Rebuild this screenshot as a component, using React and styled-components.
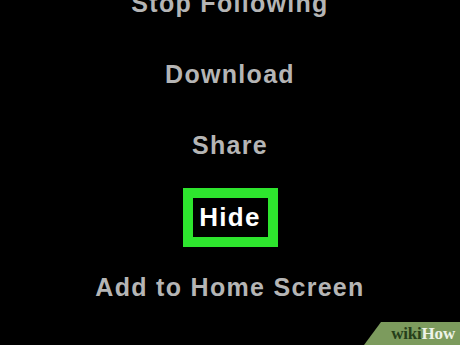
import React from 'react';
import styled, { createGlobalStyle } from 'styled-components';

const GlobalStyle = createGlobalStyle`
  html, body {
    margin: 0;
    padding: 0;
    background: #000;
  }
  body {
    width: 460px;
    height: 345px;
    overflow: hidden;
  }
`;

const Screen = styled.div`
  position: relative;
  width: 460px;
  height: 345px;
  background: #000;
  overflow: hidden;
`;

const Menu = styled.ul`
  list-style: none;
  margin: -32px 0 0;
  padding: 0;
  display: flex;
  flex-direction: column;
  align-items: center;
`;

const Item = styled.li`
  height: 71px;
  display: flex;
  align-items: center;
  justify-content: center;
  font-family: 'Liberation Sans', Arial, sans-serif;
  font-weight: bold;
  font-size: 25px;
  letter-spacing: 1.3px;
  color: ${(p) => (p.active ? '#fff' : '#b5b5b5')};
`;

const Highlight = styled.span`
  display: inline-flex;
  align-items: center;
  justify-content: center;
  width: 75px;
  height: 39px;
  margin-top: 2px;
  border: 10px solid #2ee52e;
  font-size: 26px;
`;

const Badge = styled.div`
  position: absolute;
  right: 0;
  bottom: 0;
  width: 96px;
  height: 23px;
  background: #7c9b5d;
  clip-path: polygon(17px 0, 100% 0, 100% 100%, 0 100%);
  display: flex;
  align-items: center;
  justify-content: flex-end;
  padding-right: 5px;
  box-sizing: border-box;
  font-family: 'Liberation Serif', 'Times New Roman', serif;
  font-weight: bold;
  font-size: 17px;
  letter-spacing: -0.2px;

  .wiki {
    color: #263f1a;
  }
  .how {
    color: #eef3e8;
  }
`;

const items = ['Stop Following', 'Download', 'Share', 'Hide', 'Add to Home Screen'];

const App = () => (
  <>
    <GlobalStyle />
    <Screen>
      <Menu>
        {items.map((label) =>
          label === 'Hide' ? (
            <Item key={label} active>
              <Highlight>{label}</Highlight>
            </Item>
          ) : (
            <Item key={label}>{label}</Item>
          )
        )}
      </Menu>
      <Badge>
        <span className="wiki">wiki</span>
        <span className="how">How</span>
      </Badge>
    </Screen>
  </>
);

export default App;
